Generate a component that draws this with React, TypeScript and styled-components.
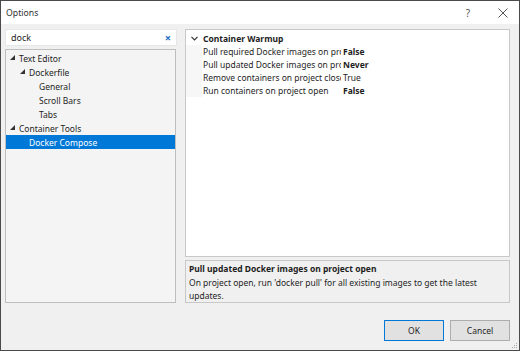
import styled, { createGlobalStyle } from 'styled-components';

const Global = createGlobalStyle`
  html, body { margin: 0; padding: 0; background: #ffffff; }
  body { font-family: "Noto Sans", "Open Sans", sans-serif; font-size: 8.5px; color: #1e1e1e; }
`;

const Window = styled.div`
  width: 520px;
  height: 351px;
  box-sizing: border-box;
  border: 1px solid #4a4a4a;
  background: #f0f0f0;
  display: flex;
  flex-direction: column;
  position: relative;
`;

const TitleBar = styled.header`
  height: 23px;
  background: #ffffff;
  display: flex;
  align-items: center;
  gap: 3px;
  padding: 0 0 0 5px;
  font-size: 8.7px;
  color: #333;
`;

const Title = styled.div`
  flex: 1;
`;

const TitleButton = styled.div`
  width: 32px;
  height: 23px;
  display: flex;
  align-items: center;
  justify-content: center;
  color: #555;
  font-size: 10px;
`;

const Body = styled.div`
  flex: 1;
  display: grid;
  grid-template-columns: 172px 1fr;
  column-gap: 8px;
  padding: 5px 9px 0 4px;
`;

const LeftCol = styled.div`
  display: flex;
  flex-direction: column;
  gap: 3px;
  height: 274px;
`;

const SearchBox = styled.div`
  height: 17px;
  background: #ffffff;
  border: 1px solid #e6e6e6;
  box-sizing: border-box;
  display: flex;
  align-items: center;
  padding: 0 5px;
  font-size: 9px;
  justify-content: space-between;
`;

const Clear = styled.span`
  color: #1e6fc6;
  font-size: 11px;
  font-weight: bold;
`;

const Tree = styled.ul`
  flex: 1;
  margin: 0;
  padding: 1px 0 0;
  list-style: none;
  background: #f4f4f4;
  border: 1px solid #bebebe;
  box-sizing: border-box;
  width: 171px;
`;

const TreeRow = styled.li<{ $level: number; $selected?: boolean }>`
  height: 14px;
  display: flex;
  align-items: center;
  padding-left: ${p => 4 + p.$level * 10}px;
  background: ${p => (p.$selected ? '#0078d7' : 'transparent')};
  color: ${p => (p.$selected ? '#ffffff' : '#1e1e1e')};
  white-space: nowrap;
`;

const Expander = styled.span`
  width: 8px;
  display: inline-flex;
  align-items: center;
  margin-right: 1px;
`;

const RightCol = styled.div`
  display: flex;
  flex-direction: column;
  gap: 3px;
  height: 274px;
`;

const Grid = styled.div`
  height: 228px;
  background: #ffffff;
  border: 1px solid #c8c8c8;
  box-sizing: border-box;
  padding-top: 1px;
`;

const Category = styled.div`
  height: 14px;
  display: flex;
  align-items: center;
  font-weight: bold;
`;

const Chevron = styled.span`
  width: 17px;
  display: inline-flex;
  justify-content: center;
`;

const PropRow = styled.div`
  height: 13.5px;
  display: grid;
  grid-template-columns: 16px 140px 1fr;
  align-items: center;
  margin-top: -0.5px;
`;

const Gutter = styled.span`
  height: 100%;
  background: #f7f7f7;
`;

const PropName = styled.span`
  overflow: hidden;
  white-space: nowrap;
  padding-left: 1px;
  margin-right: 1px;
`;

const PropValue = styled.span<{ $bold?: boolean }>`
  font-weight: ${p => (p.$bold ? 'bold' : 'normal')};
  padding-left: 1px;
`;

const Desc = styled.div`
  height: 43px;
  border: 1px solid #c8c8c8;
  box-sizing: border-box;
  background: #f0f0f0;
  padding: 1px 3px;
  line-height: 13.5px;
`;

const DescTitle = styled.div`
  font-weight: bold;
`;

const Footer = styled.div`
  display: flex;
  justify-content: flex-end;
  gap: 6px;
  padding: 0 9px 9px 0;
  margin-top: 15px;
`;

const Button = styled.div<{ $default?: boolean }>`
  width: 60px;
  height: 21px;
  box-sizing: border-box;
  background: #e1e1e1;
  border: 1px solid ${p => (p.$default ? '#0078d7' : '#adadad')};
  display: flex;
  align-items: center;
  justify-content: center;
`;

const Grip = styled.svg`
  position: absolute;
  right: 1px;
  bottom: 1px;
`;

const Tri = () => (
  <svg width="6" height="6" viewBox="0 0 6 6">
    <polygon points="5,0 5,5 0,5" fill="#333" />
  </svg>
);

const tree = [
  { label: 'Text Editor', level: 0, exp: true },
  { label: 'Dockerfile', level: 1, exp: true },
  { label: 'General', level: 2 },
  { label: 'Scroll Bars', level: 2 },
  { label: 'Tabs', level: 2 },
  { label: 'Container Tools', level: 0, exp: true },
  { label: 'Docker Compose', level: 1, selected: true },
];

const props = [
  { name: 'Pull required Docker images on project open', value: 'False', bold: true },
  { name: 'Pull updated Docker images on project open', value: 'Never', bold: true },
  { name: 'Remove containers on project close', value: 'True' },
  { name: 'Run containers on project open', value: 'False', bold: true },
];

export default function App() {
  return (
    <>
      <Global />
      <Window>
        <TitleBar>
          <Title>Options</Title>
          <TitleButton>?</TitleButton>
          <TitleButton>
            <svg width="10" height="10" viewBox="0 0 10 10">
              <path d="M0.5 0.5 L9.5 9.5 M9.5 0.5 L0.5 9.5" stroke="#555" strokeWidth="1" />
            </svg>
          </TitleButton>
        </TitleBar>
        <Body>
          <LeftCol>
            <SearchBox>
              <span>dock</span>
              <Clear>×</Clear>
            </SearchBox>
            <Tree>
              {tree.map(t => (
                <TreeRow key={t.label} $level={t.level} $selected={t.selected}>
                  <Expander>{t.exp ? <Tri /> : null}</Expander>
                  {t.label}
                </TreeRow>
              ))}
            </Tree>
          </LeftCol>
          <RightCol>
            <Grid>
              <Category>
                <Chevron>
                  <svg width="7" height="5" viewBox="0 0 7 5">
                    <path d="M0.5 0.8 L3.5 3.8 L6.5 0.8" stroke="#333" strokeWidth="1.2" fill="none" />
                  </svg>
                </Chevron>
                Container Warmup
              </Category>
              {props.map(p => (
                <PropRow key={p.name}>
                  <Gutter />
                  <PropName>{p.name}</PropName>
                  <PropValue $bold={p.bold}>{p.value}</PropValue>
                </PropRow>
              ))}
            </Grid>
            <Desc>
              <DescTitle>Pull updated Docker images on project open</DescTitle>
              <div>On project open, run 'docker pull' for all existing images to get the latest updates.</div>
            </Desc>
          </RightCol>
        </Body>
        <Footer>
          <Button $default>OK</Button>
          <Button>Cancel</Button>
        </Footer>
        <Grip width="6" height="6" viewBox="0 0 6 6">
          <rect x="4" y="0" width="1" height="1" fill="#aaa" />
          <rect x="2" y="2" width="1" height="1" fill="#aaa" />
          <rect x="4" y="2" width="1" height="1" fill="#aaa" />
          <rect x="0" y="4" width="1" height="1" fill="#aaa" />
          <rect x="2" y="4" width="1" height="1" fill="#aaa" />
          <rect x="4" y="4" width="1" height="1" fill="#aaa" />
        </Grip>
      </Window>
    </>
  );
}
